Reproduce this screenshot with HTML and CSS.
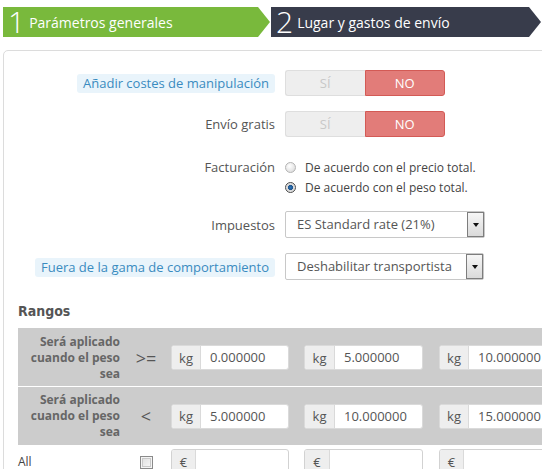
FILE: index.html
```html
<!DOCTYPE html>
<html lang="es">
<head>
<meta charset="utf-8">
<title>Transportista</title>
<link rel="stylesheet" href="styles.css">
</head>
<body>
<div class="steps">
  <div class="step step-done"><span class="num">1</span><span class="txt">Parámetros generales</span></div>
  <div class="step step-current"><span class="num">2</span><span class="txt">Lugar y gastos de envío</span></div>
</div>

<div class="panel">
  <div class="row r1">
    <div class="lbl"><span class="tip">Añadir costes de manipulación</span></div>
    <div class="ctl">
      <div class="toggle"><span class="yes">SÍ</span><span class="no">NO</span></div>
    </div>
  </div>
  <div class="row r2">
    <div class="lbl">Envío gratis</div>
    <div class="ctl">
      <div class="toggle"><span class="yes">SÍ</span><span class="no">NO</span></div>
    </div>
  </div>
  <div class="row r3">
    <div class="lbl lbl-top">Facturación</div>
    <div class="ctl radios">
      <div class="opt"><span class="radio"></span>De acuerdo con el precio total.</div>
      <div class="opt"><span class="radio checked"></span>De acuerdo con el peso total.</div>
    </div>
  </div>
  <div class="row r4">
    <div class="lbl">Impuestos</div>
    <div class="ctl">
      <div class="select"><span class="sel-text">ES Standard rate (21%)</span><span class="sel-btn"><span class="tri"></span></span></div>
    </div>
  </div>
  <div class="row r5">
    <div class="lbl"><span class="tip">Fuera de la gama de comportamiento</span></div>
    <div class="ctl">
      <div class="select"><span class="sel-text">Deshabilitar transportista</span><span class="sel-btn"><span class="tri"></span></span></div>
    </div>
  </div>

  <div class="ranges-head">Rangos</div>
  <div class="ranges">
    <div class="trow gray">
      <div class="c-lbl">Será aplicado<br>cuando el peso<br>sea</div>
      <div class="c-op">&gt;=</div>
      <div class="c c1"><div class="grp"><span class="add">kg</span><span class="inp">0.000000</span></div></div>
      <div class="c c2"><div class="grp"><span class="add">kg</span><span class="inp">5.000000</span></div></div>
      <div class="c c3"><div class="grp"><span class="add">kg</span><span class="inp">10.000000</span></div></div>
    </div>
    <div class="trow gray second">
      <div class="c-lbl">Será aplicado<br>cuando el peso<br>sea</div>
      <div class="c-op">&lt;</div>
      <div class="c c1"><div class="grp"><span class="add">kg</span><span class="inp">5.000000</span></div></div>
      <div class="c c2"><div class="grp"><span class="add">kg</span><span class="inp">10.000000</span></div></div>
      <div class="c c3"><div class="grp"><span class="add">kg</span><span class="inp">15.000000</span></div></div>
    </div>
    <div class="trow plain">
      <div class="c-all">All</div>
      <div class="c-op"><span class="check"></span></div>
      <div class="c c1"><div class="grp"><span class="add eur">€</span><span class="inp"></span></div></div>
      <div class="c c2"><div class="grp"><span class="add eur">€</span><span class="inp"></span></div></div>
      <div class="c c3"><div class="grp"><span class="add eur">€</span><span class="inp"></span></div></div>
    </div>
  </div>
</div>
</body>
</html>
```

FILE: styles.css
```css
html, body {
  margin: 0;
  padding: 0;
  overflow: hidden;
  background: #fff;
}
body {
  width: 542px;
  height: 469px;
  font-family: "Open Sans", "DejaVu Sans", sans-serif;
  color: #555;
}

/* wizard steps */
.steps {
  display: flex;
  padding-top: 7px;
}
.step {
  height: 30px;
  display: flex;
  align-items: center;
  color: #fff;
  clip-path: polygon(0 0, calc(100% - 12px) 0, 100% 50%, calc(100% - 12px) 100%, 0 100%);
  white-space: nowrap;
}
.step-done {
  margin-left: 3px;
  width: 267px;
  background: #79b93c;
}
.step-current {
  margin-left: 1px;
  width: 270px;
  background: #383c4b;
}
.num {
  font-size: 30px;
  font-weight: 300;
  line-height: 30px;
  padding-left: 5px;
}
.txt {
  font-size: 14px;
  margin-left: 4px;
}

/* panel */
.panel {
  margin: 13px 0 0 3px;
  width: 600px;
  height: 500px;
  border: 1px solid #dcdcdc;
  border-radius: 5px;
  padding-top: 19px;
  box-sizing: border-box;
}
.row {
  display: flex;
  align-items: center;
}
.r2 { margin-top: 15px; }
.r3 { margin-top: 20px; align-items: flex-start; }
.r4 { margin-top: 14px; }
.r5 { margin-top: 15px; }

.lbl {
  width: 271px;
  text-align: right;
  font-size: 13px;
  line-height: 20px;
  color: #555;
}
.tip {
  display: inline-block;
  background: #e9f4fb;
  color: #3a8bc0;
  padding: 0 6px;
  line-height: 19px;
  border-radius: 3px;
}
.ctl {
  margin-left: 10px;
}

/* toggle */
.toggle {
  display: flex;
  width: 160px;
  height: 26px;
  font-size: 13px;
}
.toggle span {
  flex: 1;
  display: flex;
  align-items: center;
  justify-content: center;
  box-sizing: border-box;
}
.toggle .yes {
  background: #eeeeee;
  border: 1px solid #dedede;
  border-right: none;
  border-radius: 3px 0 0 3px;
  color: #c8c8c8;
}
.toggle .no {
  background: #e27c79;
  border: 1px solid #d35a55;
  border-radius: 0 3px 3px 0;
  color: #fff;
}

/* radios */
.radios {
  display: flex;
  flex-direction: column;
}
.opt {
  height: 20px;
  display: flex;
  align-items: center;
  font-size: 12px;
  color: #444;
}
.radio {
  width: 11px;
  height: 11px;
  box-sizing: border-box;
  border-radius: 50%;
  border: 1px solid #b4b4b4;
  background: radial-gradient(circle at 40% 35%, #ffffff 0%, #e6e6e6 60%, #d0d0d0 100%);
  margin: 0 9px 0 0;
  position: relative;
}
.radio.checked {
  border-color: #4a4a4a;
  background: radial-gradient(circle at 50% 50%, #2f76b8 0%, #1d5590 35%, #d6d6d6 45%, #f2f2f2 100%);
}

/* select */
.select {
  width: 200px;
  height: 27px;
  box-sizing: border-box;
  border: 1px solid #c8c8c8;
  border-radius: 2px;
  background: #fff;
  display: flex;
  align-items: stretch;
}
.r5 .select { width: 199px; }
.sel-text {
  flex: 1;
  padding-left: 11px;
  font-size: 13px;
  line-height: 25px;
  color: #555;
  white-space: nowrap;
}
.sel-btn {
  width: 17px;
  box-sizing: border-box;
  border: 1px solid #7d7d7d;
  background: linear-gradient(#f6f6f6, #dadada);
  display: flex;
  align-items: center;
  justify-content: center;
}
.tri {
  width: 0;
  height: 0;
  border-left: 3.5px solid transparent;
  border-right: 3.5px solid transparent;
  border-top: 4px solid #111;
}

/* ranges */
.ranges-head {
  margin: 21px 0 0 14px;
  padding-bottom: 7px;
  border-bottom: 1px solid #cccccc;
  font-family: "Liberation Sans Narrow", "DejaVu Sans Condensed", sans-serif;
  font-weight: bold;
  font-size: 14px;
  line-height: 20px;
  color: #555;
}
.ranges {
  margin-left: 14px;
}
.trow {
  display: flex;
  align-items: center;
}
.trow.gray {
  background: #cccccc;
  height: 57px;
}
.trow.second {
  margin-top: 1px;
  height: 58px;
}
.trow.plain {
  padding-top: 4px;
  align-items: flex-start;
}
.c-lbl {
  width: 110px;
  box-sizing: border-box;
  padding-right: 8px;
  text-align: right;
  font-size: 12px;
  font-weight: bold;
  line-height: 16px;
  color: #666;
}
.c-all {
  width: 110px;
  font-size: 12px;
  line-height: 26px;
  color: #444;
}
.c-op {
  width: 36px;
  text-align: center;
  font-size: 18px;
  color: #555;
  display: flex;
  justify-content: center;
  align-items: center;
}
.plain .c-op { height: 26px; }
.c {
  box-sizing: border-box;
  padding-left: 7px;
}
.c1 { width: 133px; }
.c2 { width: 135px; }
.c3 { width: 135px; }
.grp {
  display: flex;
  width: 118px;
  height: 25px;
  box-sizing: border-box;
  border: 1px solid #dadada;
  border-radius: 3px;
  background: #fff;
  overflow: hidden;
}
.c2 .grp, .c3 .grp { width: 119px; }
.plain .grp { height: 26px; border-color: #d2d2d2; }
.add {
  width: 29px;
  flex: none;
  box-sizing: border-box;
  background: #eeeeee;
  border-right: 1px solid #dadada;
  display: flex;
  align-items: center;
  justify-content: center;
  font-size: 13px;
  color: #555;
}
.add.eur { width: 24px; }
.c2 .add { width: 30px; }
.c2 .add.eur { width: 25px; }
.inp {
  flex: 1;
  padding-left: 9px;
  font-size: 13px;
  line-height: 23px;
  color: #555;
}
.check {
  width: 13px;
  height: 13px;
  box-sizing: border-box;
  border: 1px solid #8a8a8a;
  background: linear-gradient(135deg, #dcdcdc, #fbfbfb);
  box-shadow: inset 0 0 0 1px #f4f4f4, inset 0 0 0 2px #c9c9c9;
}
```
